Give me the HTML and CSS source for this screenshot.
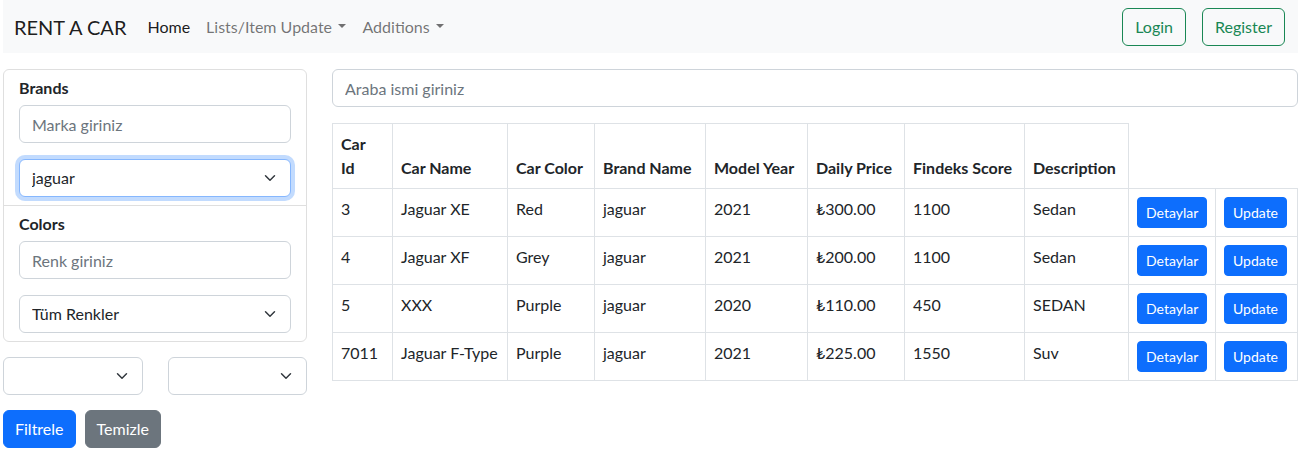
FILE: index.html
```html
<!DOCTYPE html>
<html lang="tr">
<head>
<meta charset="utf-8">
<title>Rent A Car</title>
<link rel="stylesheet" href="styles.css">
</head>
<body>
<div class="page">
  <nav class="navbar">
    <a class="brand" href="#">RENT A CAR</a>
    <ul class="nav">
      <li><a class="nav-link active" href="#">Home</a></li>
      <li><a class="nav-link caret" href="#">Lists/Item Update</a></li>
      <li><a class="nav-link caret" href="#">Additions</a></li>
    </ul>
    <div class="nav-actions">
      <button class="btn btn-outline-success">Login</button>
      <button class="btn btn-outline-success">Register</button>
    </div>
  </nav>

  <div class="layout">
    <aside class="sidebar">
      <div class="card">
        <div class="card-section">
          <div class="section-title">Brands</div>
          <input class="form-control" type="text" placeholder="Marka giriniz">
          <select class="form-select is-focused">
            <option>jaguar</option>
          </select>
        </div>
        <div class="card-section">
          <div class="section-title">Colors</div>
          <input class="form-control" type="text" placeholder="Renk giriniz">
          <select class="form-select">
            <option>Tüm Renkler</option>
          </select>
        </div>
      </div>
      <div class="select-pair">
        <select class="form-select"><option></option></select>
        <select class="form-select"><option></option></select>
      </div>
      <div class="filter-actions">
        <button class="btn btn-primary">Filtrele</button>
        <button class="btn btn-secondary">Temizle</button>
      </div>
    </aside>

    <main class="content">
      <input class="form-control search" type="text" placeholder="Araba ismi giriniz">
      <table class="cars">
        <colgroup>
          <col class="c1"><col class="c2"><col class="c3"><col class="c4"><col class="c5">
          <col class="c6"><col class="c7"><col class="c8"><col class="c9"><col class="c10">
        </colgroup>
        <thead>
          <tr>
            <th>Car<br>Id</th>
            <th>Car Name</th>
            <th>Car Color</th>
            <th>Brand Name</th>
            <th>Model Year</th>
            <th>Daily Price</th>
            <th>Findeks Score</th>
            <th>Description</th>
          </tr>
        </thead>
        <tbody>
          <tr>
            <td>3</td><td>Jaguar XE</td><td>Red</td><td>jaguar</td><td>2021</td><td>₺300.00</td><td>1100</td><td>Sedan</td>
            <td><button class="btn btn-sm btn-primary">Detaylar</button></td>
            <td><button class="btn btn-sm btn-primary">Update</button></td>
          </tr>
          <tr>
            <td>4</td><td>Jaguar XF</td><td>Grey</td><td>jaguar</td><td>2021</td><td>₺200.00</td><td>1100</td><td>Sedan</td>
            <td><button class="btn btn-sm btn-primary">Detaylar</button></td>
            <td><button class="btn btn-sm btn-primary">Update</button></td>
          </tr>
          <tr>
            <td>5</td><td>XXX</td><td>Purple</td><td>jaguar</td><td>2020</td><td>₺110.00</td><td>450</td><td>SEDAN</td>
            <td><button class="btn btn-sm btn-primary">Detaylar</button></td>
            <td><button class="btn btn-sm btn-primary">Update</button></td>
          </tr>
          <tr>
            <td>7011</td><td>Jaguar F-Type</td><td>Purple</td><td>jaguar</td><td>2021</td><td>₺225.00</td><td>1550</td><td>Suv</td>
            <td><button class="btn btn-sm btn-primary">Detaylar</button></td>
            <td><button class="btn btn-sm btn-primary">Update</button></td>
          </tr>
        </tbody>
      </table>
    </main>
  </div>
</div>
</body>
</html>
```

FILE: styles.css
```css
* { box-sizing: border-box; }

html, body {
  margin: 0;
  padding: 0;
  background: #fff;
}

body {
  font-family: Lato, "Liberation Sans", sans-serif;
  font-size: 16px;
  line-height: 1.5;
  color: #212529;
}

.page {
  padding: 0 5px 0 3px;
}

/* ---------- navbar ---------- */
.navbar {
  display: flex;
  align-items: center;
  height: 53px;
  padding: 0 13px 0 11px;
  background: #f8f9fa;
}

.brand {
  font-size: 20px;
  line-height: 30px;
  color: rgba(0, 0, 0, 0.9);
  text-decoration: none;
  margin-right: 13px;
}

.nav {
  display: flex;
  list-style: none;
  margin: 0;
  padding: 0;
}

.nav-link {
  display: block;
  padding: 8px 8px;
  color: rgba(0, 0, 0, 0.55);
  text-decoration: none;
}

.nav-link.active {
  color: rgba(0, 0, 0, 0.9);
}

.nav-link.caret::after {
  content: "";
  display: inline-block;
  margin-left: 0.4em;
  vertical-align: 0.255em;
  border-top: 0.3em solid;
  border-right: 0.3em solid transparent;
  border-left: 0.3em solid transparent;
}

.nav-actions {
  margin-left: auto;
  display: flex;
  gap: 16px;
}

/* ---------- buttons ---------- */
.btn {
  font-family: inherit;
  font-size: 16px;
  line-height: 24px;
  padding: 6px 12px;
  border: 1px solid transparent;
  border-radius: 6px;
  cursor: pointer;
  background: transparent;
}

.btn-outline-success {
  color: #198754;
  border-color: #198754;
}

.btn-primary {
  color: #fff;
  background: #0d6efd;
  border-color: #0d6efd;
}

.btn-secondary {
  color: #fff;
  background: #6c757d;
  border-color: #6c757d;
}

.btn-sm {
  font-size: 14px;
  line-height: 21px;
  padding: 4px 8px;
  border-radius: 4px;
}

/* ---------- layout ---------- */
.layout {
  display: grid;
  grid-template-columns: 304px 1fr;
  column-gap: 25px;
  margin-top: 16px;
}

/* ---------- form controls ---------- */
.form-control,
.form-select {
  display: block;
  width: 100%;
  height: 38px;
  font-family: inherit;
  font-size: 16px;
  line-height: 24px;
  color: #212529;
  background-color: #fff;
  border: 1px solid #ced4da;
  border-radius: 6px;
  padding: 6px 12px;
  margin: 0;
}

.form-control::placeholder {
  color: #6c757d;
  opacity: 1;
}

.form-select {
  appearance: none;
  -webkit-appearance: none;
  padding-right: 36px;
  background-image: url("data:image/svg+xml,%3csvg xmlns='http://www.w3.org/2000/svg' viewBox='0 0 16 16'%3e%3cpath fill='none' stroke='%23343a40' stroke-linecap='round' stroke-linejoin='round' stroke-width='2' d='m2 5 6 6 6-6'/%3e%3c/svg%3e");
  background-repeat: no-repeat;
  background-position: right 12px center;
  background-size: 16px 12px;
}

.form-select.is-focused {
  border-color: #86b7fe;
  box-shadow: 0 0 0 4px rgba(13, 110, 253, 0.25);
}

/* ---------- sidebar ---------- */
.card {
  border: 1px solid #dfdfdf;
  border-radius: 6px;
  background: #fff;
}

.card-section {
  padding: 6px 15px 8px;
}

.card-section + .card-section {
  border-top: 1px solid #dfdfdf;
}

.section-title {
  font-weight: 700;
  line-height: 24px;
  margin-bottom: 5px;
}

.card-section .form-control {
  margin-bottom: 16px;
}

.select-pair {
  display: grid;
  grid-template-columns: 1fr 1fr;
  column-gap: 25px;
  margin-top: 15px;
}

.filter-actions {
  display: flex;
  gap: 9px;
  margin-top: 15px;
}

.filter-actions .btn {
  padding: 6px 11px;
}

/* ---------- content ---------- */
.search {
  margin-bottom: 16px;
}

.cars {
  border-collapse: collapse;
  table-layout: fixed;
  width: 965px;
}

.cars th,
.cars td {
  border: 1px solid #dee2e6;
  padding: 8px;
  text-align: left;
  white-space: nowrap;
}

.cars th {
  font-weight: 700;
  vertical-align: bottom;
}

.cars td {
  vertical-align: top;
}

.cars tbody tr {
  height: 48px;
}

.c1 { width: 60px; }
.c2 { width: 115px; }
.c3 { width: 87px; }
.c4 { width: 111px; }
.c5 { width: 102px; }
.c6 { width: 97px; }
.c7 { width: 120px; }
.c8 { width: 104px; }
.c9 { width: 87px; }
.c10 { width: 82px; }
```
